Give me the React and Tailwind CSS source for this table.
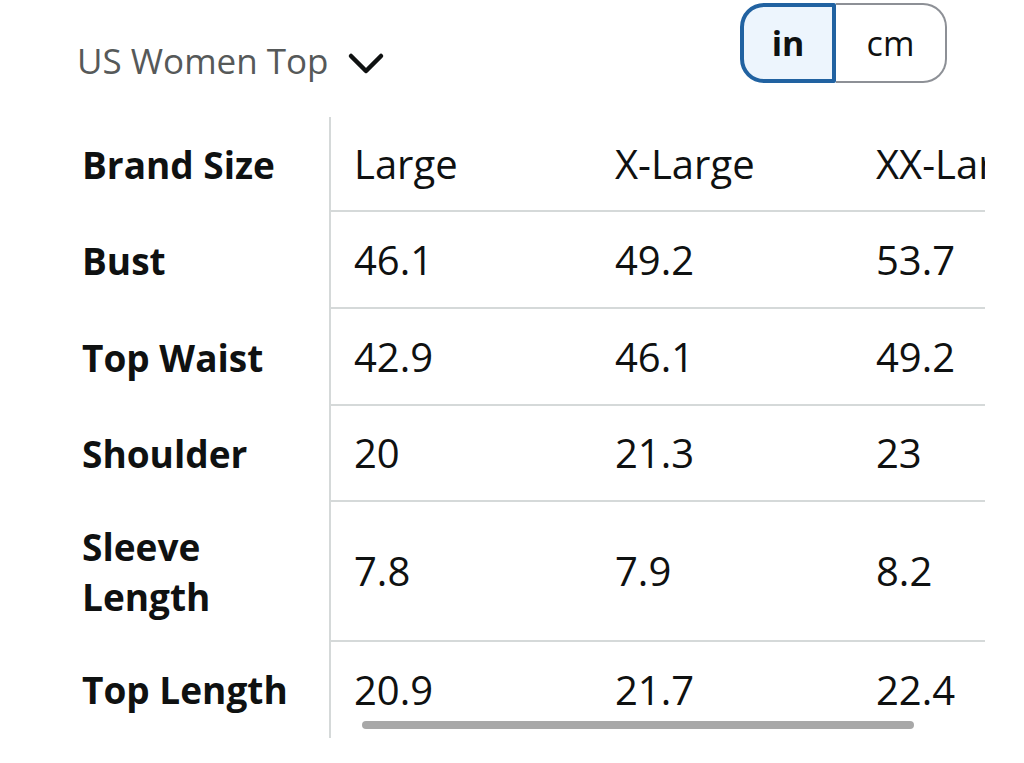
import React from "react";

const rows = [
  { label: "Bust", values: ["46.1", "49.2", "53.7"], h: "h-[97px]" },
  { label: "Top Waist", values: ["42.9", "46.1", "49.2"], h: "h-[97px]" },
  { label: "Shoulder", values: ["20", "21.3", "23"], h: "h-[96px]" },
  { label: "Sleeve Length", values: ["7.8", "7.9", "8.2"], h: "h-[140px]", wrap: true },
  { label: "Top Length", values: ["20.9", "21.7", "22.4"], h: "h-[96px]", last: true },
];

const Row = ({ label, values, h, wrap, last }) => (
  <div className={`flex ${h}`}>
    <div className="w-[331px] shrink-0 pl-[82px] pr-4 flex items-center border-r-[2px] border-[#d5d9d9]">
      <span
        className={`font-bold text-[37px] leading-[50px] text-[#0f1111] ${wrap ? "w-[150px]" : "whitespace-nowrap"}`}
      >
        {label}
      </span>
    </div>
    <div className={`flex-1 overflow-hidden flex items-center ${last ? "" : "border-b-[2px] border-[#d5d9d9]"}`}>
      {values.map((v, i) => (
        <div key={i} className="w-[261px] shrink-0 pl-[23px] text-[40px] whitespace-nowrap text-[#0f1111]">
          {v}
        </div>
      ))}
    </div>
  </div>
);

export default function App() {
  return (
    <div className="w-[1024px] h-[763px] bg-white relative overflow-hidden font-['Open_Sans',sans-serif]">
      {/* Header */}
      <div className="flex items-start justify-between h-[117px]">
        <button className="flex items-center gap-[18px] ml-[77px] mt-[43px]">
          <span className="text-[35px] text-[#565959] leading-none">US Women Top</span>
          <svg width="38" height="26" viewBox="0 0 38 26" className="mt-[6px]">
            <polyline
              points="4,5 19,20 34,5"
              fill="none"
              stroke="#0f1111"
              strokeWidth="4.5"
              strokeLinecap="round"
              strokeLinejoin="round"
            />
          </svg>
        </button>
        <div className="flex mt-[3px] mr-[77px] h-[80px]">
          <div className="w-[96px] flex items-center justify-center bg-[#edf5fd] border-[4px] border-[#2162a1] rounded-l-[24px] rounded-r-[2px]">
            <span className="text-[34px] font-bold text-[#0f1111]">in</span>
          </div>
          <div className="w-[111px] flex items-center justify-center border-[2px] border-l-0 border-[#8d9096] rounded-r-[24px]">
            <span className="text-[34px] text-[#0f1111]">cm</span>
          </div>
        </div>
      </div>

      {/* Table */}
      <div className="w-[985px]">
        <Row label="Brand Size" values={["Large", "X-Large", "XX-Large"]} h="h-[95px]" />
        {rows.map((r) => (
          <Row key={r.label} {...r} />
        ))}
      </div>

      {/* Scrollbar */}
      <div className="absolute left-[362px] top-[721px] w-[552px] h-[8px] rounded-full bg-[#a8a8a8]" />
    </div>
  );
}
